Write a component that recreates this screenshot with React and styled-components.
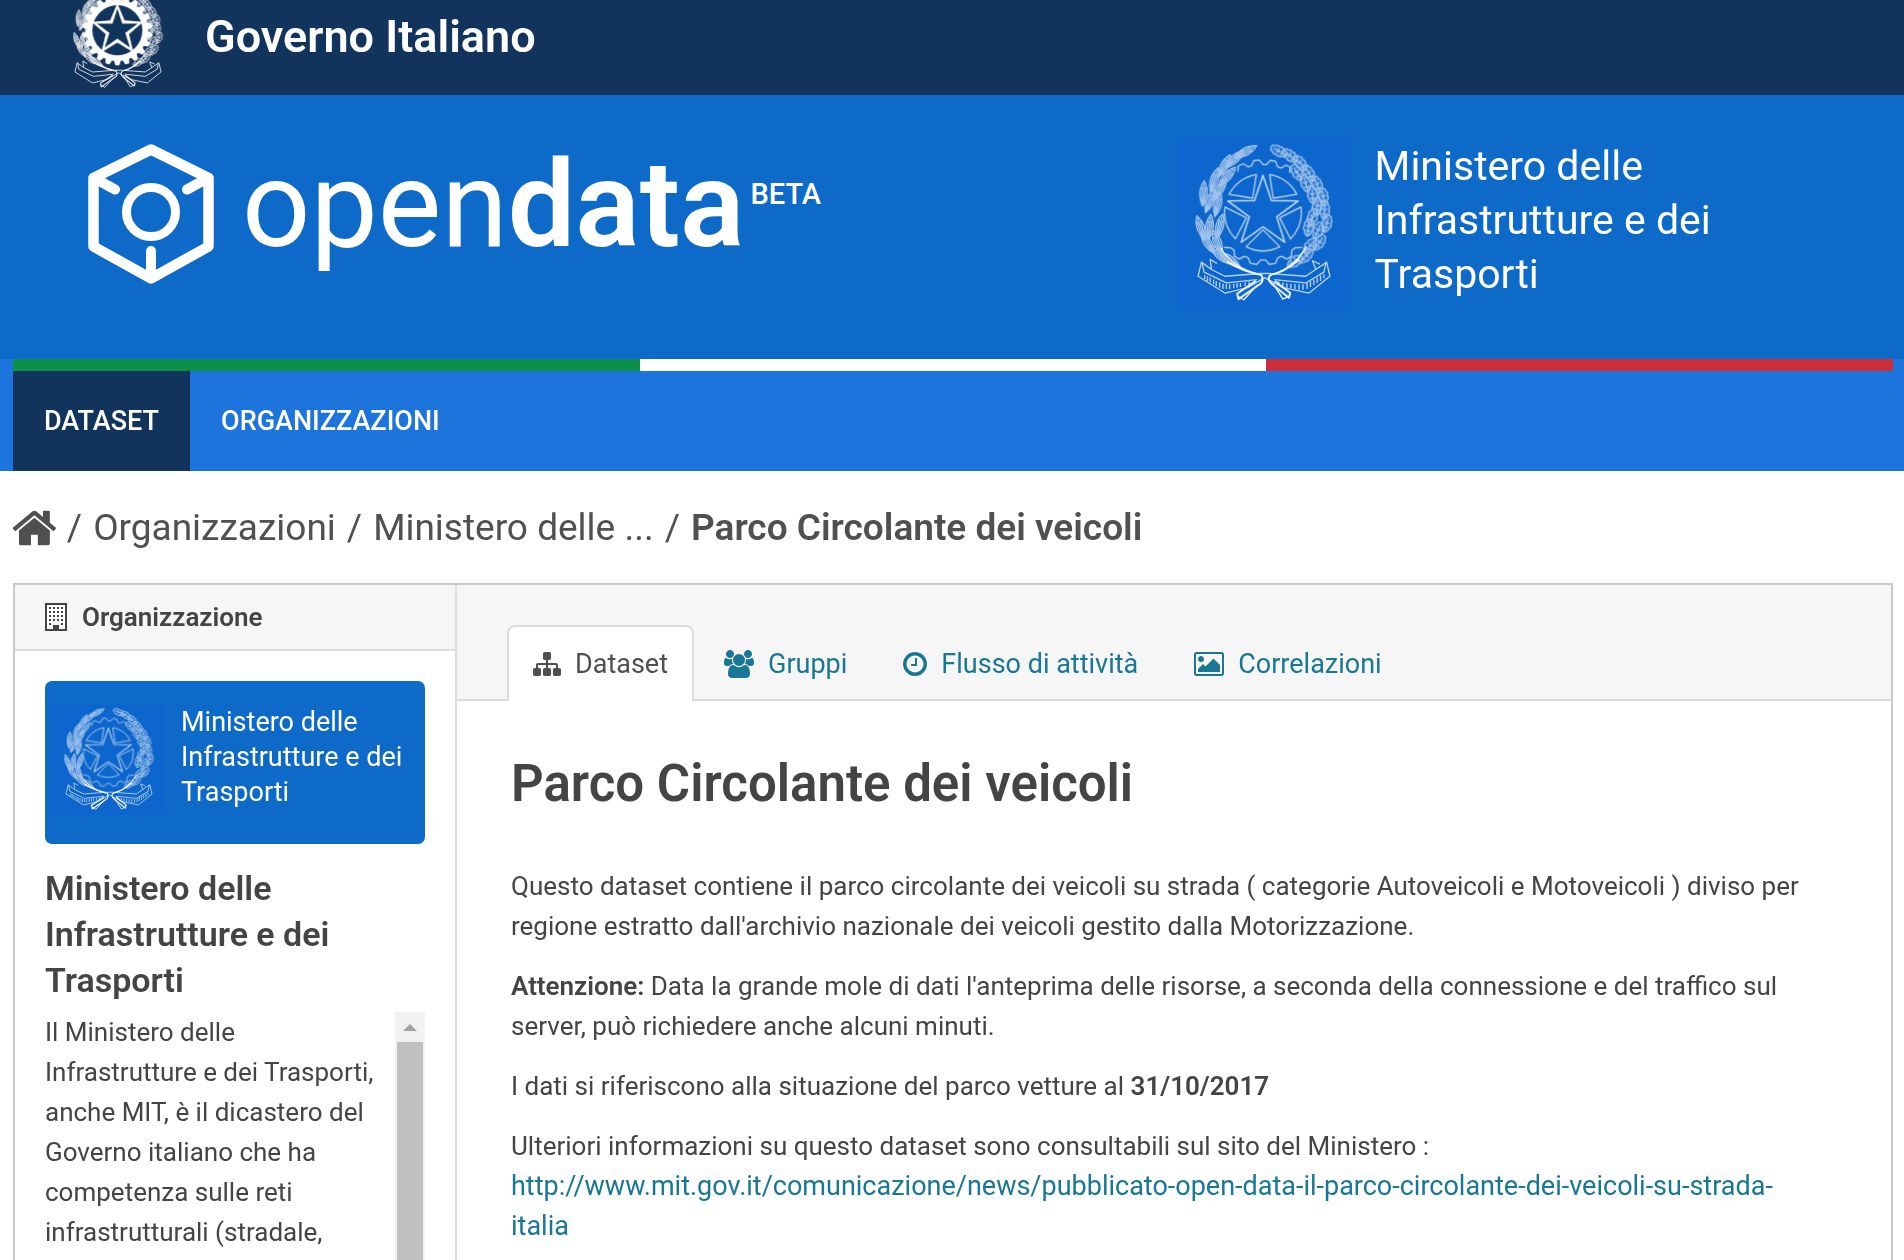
import React from "react";
import styled, { createGlobalStyle, css } from "styled-components";

const color = {
  navy: "#12345c",
  header: "#0d6ac8",
  tile: "#0d66cd",
  nav: "#1c74dc",
  text: "#444444",
  link: "#187794",
  panel: "#f6f6f6",
  edge: "#c8c8c8",
  line: "#dcdcdc",
};

const GlobalStyle = createGlobalStyle`
  *, *::before, *::after { box-sizing: border-box; }
  body {
    margin: 0;
    color: ${color.text};
    background: #ffffff;
    font-family: Roboto, "Liberation Sans", sans-serif;
    font-size: 26px;
    line-height: 40px;
  }
  a { color: inherit; text-decoration: none; }
  h1, h2, p, ul, ol { margin: 0; padding: 0; }
  ul, ol { list-style: none; }
  svg { display: block; flex: none; }
`;

const Page = styled.div`
  display: flex;
  flex-direction: column;
  height: 100vh;
  overflow: hidden;
`;

/* ---------- government bar ---------- */

const GovernmentBar = styled.div`
  display: flex;
  flex: none;
  align-items: flex-end;
  gap: 40px;
  height: 95px;
  padding: 0 71px 6px;
  overflow: hidden;
  color: #ffffff;
  background: ${color.navy};
`;

const GovernmentName = styled.a`
  padding-bottom: 22px;
  font-size: 45px;
  font-weight: 600;
  line-height: 60px;
`;

/* ---------- site header ---------- */

const SiteHeader = styled.header`
  display: flex;
  flex: none;
  justify-content: space-between;
  height: 264px;
  padding-left: 88px;
  color: #ffffff;
  background: ${color.header};
`;

const Brand = styled.a`
  display: flex;
  align-items: flex-start;
  gap: 28px;
  padding-top: 49px;
`;

const Wordmark = styled.span`
  display: flex;
  font-size: 120px;
  line-height: 122px;
`;

const Strong = styled.strong`
  font-weight: 600;
`;

const Beta = styled.span`
  padding: 26px 0 0 6px;
  font-size: 29px;
  font-weight: 500;
  line-height: 48px;
`;

const MinistryLogo = styled.div`
  display: flex;
  color: #ffffff;

  ${({ $compact }) =>
    $compact
      ? css`
          gap: 16px;
          padding: 22px 8px 29px;
          border-radius: 7px;
          background: ${color.header};
          font-size: 27px;
          line-height: 35px;
        `
      : css`
          gap: 24px;
          width: 40%;
          padding-top: 42px;
          font-size: 41px;
          line-height: 54px;
        `}
`;

const EmblemTile = styled.span`
  display: grid;
  place-items: center;
  flex: none;
  width: ${({ $compact }) => ($compact ? 112 : 173)}px;
  height: ${({ $compact }) => ($compact ? 112 : 172)}px;
  background: ${color.tile};
`;

const MinistryName = styled.span`
  max-width: 360px;
  padding-top: 2px;
`;

/* ---------- navigation ---------- */

const NavBar = styled.nav`
  flex: none;
  padding: 0 11px 0 13px;
  background: ${color.nav};
`;

const Flag = styled.div`
  display: grid;
  grid-template-columns: repeat(3, 1fr);
  height: 12px;
`;

const FlagBand = styled.span`
  background: ${({ $fill }) => $fill};
`;

const NavList = styled.ul`
  display: flex;
`;

const NavLink = styled.a`
  display: block;
  padding: 0 31px;
  color: #ffffff;
  background: ${({ $active }) => ($active ? color.navy : "transparent")};
  font-size: 27px;
  font-weight: 500;
  line-height: 100px;
`;

/* ---------- breadcrumb ---------- */

const Breadcrumb = styled.ol`
  display: flex;
  flex: none;
  align-items: center;
  height: 112px;
  padding: 2px 13px 0;
  color: #505050;
  font-size: 37px;
  line-height: 48px;
`;

const Crumb = styled.li`
  display: flex;
  font-weight: ${({ $current }) => ($current ? 600 : 400)};

  li + &::before {
    content: "/";
    padding: 0 11px;
    font-weight: 400;
  }
`;

/* ---------- content panel ---------- */

const Panel = styled.div`
  display: grid;
  flex: 1;
  grid-template-columns: 442px 1fr;
  min-height: 0;
  margin: 0 11px 0 13px;
  border: 2px solid ${color.edge};
  border-bottom: 0;
`;

const Sidebar = styled.aside`
  display: flex;
  flex-direction: column;
  min-height: 0;
  border-right: 2px solid ${color.line};
`;

const SidebarTitle = styled.h2`
  display: flex;
  flex: none;
  align-items: center;
  gap: 15px;
  height: 66px;
  padding: 0 30px;
  border-bottom: 2px solid ${color.line};
  background: ${color.panel};
  font-size: 26px;
  font-weight: 600;
`;

const SidebarBody = styled.div`
  display: flex;
  flex: 1;
  flex-direction: column;
  min-height: 0;
  padding: 30px 30px 0;
`;

const OrganizationName = styled.h1`
  max-width: 320px;
  padding: 21px 0 9px;
  font-size: 34px;
  font-weight: 600;
  line-height: 46px;
`;

const ScrollArea = styled.div`
  display: grid;
  flex: 1;
  grid-template-columns: 1fr 30px;
  column-gap: 10px;
  min-height: 0;
  overflow: hidden;
`;

const ScrollTrack = styled.div`
  display: flex;
  flex-direction: column;
  background: #f1f1f1;
`;

const ScrollArrow = styled.button`
  display: grid;
  place-items: center;
  height: 30px;
  padding: 0;
  border: 0;
  background: transparent;
`;

const ScrollThumb = styled.span`
  flex: 1;
  margin: 0 2px;
  background: #c1c1c1;
`;

/* ---------- main column ---------- */

const TabBar = styled.ul`
  display: flex;
  align-items: flex-end;
  gap: 4px;
  height: 116px;
  padding: 0 50px;
  background: ${color.panel};
  box-shadow: inset 0 -2px ${color.line};
`;

const Tab = styled.a`
  display: flex;
  align-items: center;
  gap: 14px;
  height: 76px;
  padding: 0 24px;
  border: 2px solid transparent;
  border-bottom: 0;
  color: ${color.link};
  font-size: 27px;

  ${({ $active }) =>
    $active &&
    css`
      border-color: ${color.line};
      border-radius: 8px 8px 0 0;
      color: #505050;
      background: #ffffff;
    `}
`;

const Article = styled.article`
  display: flex;
  flex-direction: column;
  gap: 20px;
  padding: 53px 70px 0 54px;
`;

const Title = styled.h1`
  padding-bottom: 32px;
  font-size: 51px;
  font-weight: 600;
  line-height: 60px;
`;

const SourceLink = styled.a`
  color: ${color.link};
  font-size: 27px;
`;

/* ---------- icons ---------- */

const ICONS = {
  home: {
    box: "97 0 1600 1792",
    d: "M1472 992v480q0 26-19 45t-45 19h-384v-384h-256v384h-384q-26 0-45-19t-19-45v-480q0-1 .5-3t.5-3l575-474 575 474q1 2 1 6zm223-69l-62 74q-8 9-21 11h-3q-13 0-21-7l-692-577-692 577q-12 8-24 7-13-2-21-11l-62-74q-8-10-7-23.5t11-21.5l719-599q32-26 76-26t76 26l244 204v-195q0-14 9-23t23-9h192q14 0 23 9t9 23v408l219 182q10 8 11 21.5t-7 23.5z",
  },
  sitemap: {
    box: "0 0 1792 1792",
    d: "M1792 1248v320q0 40-28 68t-68 28h-320q-40 0-68-28t-28-68v-320q0-40 28-68t68-28h96v-192h-512v192h96q40 0 68 28t28 68v320q0 40-28 68t-68 28h-320q-40 0-68-28t-28-68v-320q0-40 28-68t68-28h96v-192h-512v192h96q40 0 68 28t28 68v320q0 40-28 68t-68 28h-320q-40 0-68-28t-28-68v-320q0-40 28-68t68-28h96v-192q0-52 38-90t90-38h512v-192h-96q-40 0-68-28t-28-68v-320q0-40 28-68t68-28h320q40 0 68 28t28 68v320q0 40-28 68t-68 28h-96v192h512q52 0 90 38t38 90v192h96q40 0 68 28t28 68z",
  },
  users: {
    box: "64 0 1920 1792",
    d: "M657 896q-162 5-265 128h-134q-82 0-138-40.5t-56-118.5q0-353 124-353 6 0 43.5 21t97.5 42.5 119 21.5q67 0 133-23-5 37-5 66 0 139 81 256zm1071 637q0 120-73 189.5t-194 69.5h-874q-121 0-194-69.5t-73-189.5q0-53 3.5-103.5t14-109 26.5-108.5 43-97.5 62-81 85.5-53.5 111.5-20q10 0 43 21.5t73 48 107 48 135 21.5 135-21.5 107-48 73-48 43-21.5q61 0 111.5 20t85.5 53.5 62 81 43 97.5 26.5 108.5 14 109 3.5 103.5zm-1024-1277q0 106-75 181t-181 75-181-75-75-181 75-181 181-75 181 75 75 181zm704 384q0 159-112.5 271.5t-271.5 112.5-271.5-112.5-112.5-271.5 112.5-271.5 271.5-112.5 271.5 112.5 112.5 271.5zm576 225q0 78-56 118.5t-138 40.5h-134q-103-123-265-128 81-117 81-256 0-29-5-66 66 23 133 23 59 0 119-21.5t97.5-42.5 43.5-21q124 0 124 353zm-128-609q0 106-75 181t-181 75-181-75-75-181 75-181 181-75 181 75 75 181z",
  },
  clock: {
    box: "128 0 1536 1792",
    d: "M1024 544v448q0 14-9 23t-23 9h-320q-14 0-23-9t-9-23v-64q0-14 9-23t23-9h224v-352q0-14 9-23t23-9h64q14 0 23 9t9 23zm416 352q0-148-73-273t-198-198-273-73-273 73-198 198-73 273 73 273 198 198 273 73 273-73 198-198 73-273zm224 0q0 209-103 385.5t-279.5 279.5-385.5 103-385.5-103-279.5-279.5-103-385.5 103-385.5 279.5-279.5 385.5-103 385.5 103 279.5 279.5 103 385.5z",
  },
  picture: {
    box: "64 0 1920 1792",
    d: "M704 576q0 80-56 136t-136 56-136-56-56-136 56-136 136-56 136 56 56 136zm1024 384v448h-1408v-192l320-320 160 160 512-512zm96-704h-1600q-13 0-22.5 9.5t-9.5 22.5v1216q0 13 9.5 22.5t22.5 9.5h1600q13 0 22.5-9.5t9.5-22.5v-1216q0-13-9.5-22.5t-22.5-9.5zm160 32v1216q0 66-47 113t-113 47h-1600q-66 0-113-47t-47-113v-1216q0-66 47-113t113-47h1600q66 0 113 47t47 113z",
  },
};

function Icon({ name, size = 28, label }) {
  const { box, d } = ICONS[name];
  return (
    <svg
      viewBox={box}
      height={size}
      fill="currentColor"
      role={label ? "img" : undefined}
      aria-label={label}
      aria-hidden={label ? undefined : true}
    >
      <path d={d} />
    </svg>
  );
}

function BuildingIcon() {
  const windows = [];
  for (let row = 0; row < 5; row += 1) {
    for (let col = 0; col < 4; col += 1) {
      if (row === 4 && (col === 1 || col === 2)) continue;
      windows.push(
        <rect key={`${row}-${col}`} x={4 + col * 4} y={4 + row * 4} width="2" height="2" />
      );
    }
  }
  return (
    <svg width="22" height="28" viewBox="0 0 22 28" fill={color.text} aria-hidden="true">
      <rect x="1" y="1" width="20" height="26" fill="#ffffff" stroke={color.text} strokeWidth="2" />
      {windows}
      <rect x="8" y="22" width="6" height="5" />
    </svg>
  );
}

function CubeLogo() {
  return (
    <svg width="126" height="140" viewBox="88 144 126 140" fill="none" stroke="#ffffff" strokeLinecap="round" strokeLinejoin="round" aria-hidden="true">
      <path d="M151 149.500L208.500 178V246.500L151 278.500L93.500 246.500V178Z" strokeWidth="10.500" />
      <path d="M94 178L115 189.500M208 178L187 189.500M151 251V276" strokeWidth="10" />
      <circle cx="151" cy="212" r="24.500" strokeWidth="9" />
    </svg>
  );
}

const CX = 257;
const CY = 246;

const polar = (r, deg, cx = CX, cy = CY) => {
  const a = ((deg - 90) * Math.PI) / 180;
  return `${(cx + r * Math.cos(a)).toFixed(1)} ${(cy + r * Math.sin(a)).toFixed(1)}`;
};

const starPath = (outer, inner) =>
  `M${Array.from({ length: 10 }, (_, i) => polar(i % 2 ? inner : outer, i * 36)).join("L")}Z`;

const gearPath = (outer, inner, teeth) => {
  const step = 360 / teeth;
  const points = [];
  for (let i = 0; i < teeth; i += 1) {
    const a = i * step;
    points.push(
      polar(inner, a - step * 0.38),
      polar(outer, a - step * 0.2),
      polar(outer, a + step * 0.2),
      polar(inner, a + step * 0.38)
    );
  }
  return `M${points.join("L")}Z`;
};

const wedgePath = (deg) =>
  `M${polar(52, deg)}L${polar(114, deg - 26)}A114 114 0 0 1 ${polar(114, deg + 26)}Z`;

const OLIVE = [
  [205, 66, 62], [172, 88, 46], [142, 108, 28], [150, 140, 42], [112, 150, 18], [128, 178, 32],
  [80, 190, 4], [100, 212, 22], [122, 222, 12], [72, 292, -18], [98, 290, 6], [128, 288, 14],
  [92, 336, -32], [122, 336, -20], [128, 372, -44], [160, 388, -54],
];
const OAK = [
  [304, 64, -62], [338, 78, -50], [368, 100, -40], [358, 128, -30], [394, 130, -30], [384, 160, -14],
  [418, 164, -20], [404, 194, -4], [436, 200, -6], [418, 228, 6], [440, 240, 4], [404, 260, 14],
  [446, 280, 16], [420, 300, 22], [392, 290, 8], [424, 336, 34], [396, 346, 38], [384, 376, 46], [352, 392, 56],
];

function Leaf({ x, y, turn, oak }) {
  const shape = oak
    ? "M0-26Q10-26 9-16Q17-12 12-3Q18 4 11 11Q10 21 0 27Q-10 21-11 11Q-18 4-12-3Q-17-12-9-16Q-10-26 0-26Z"
    : "M0-38Q13-16 11 4Q9 24 0 38Q-9 24-11 4Q-13-16 0-38Z";
  const vein = oak ? "M0-18V27M-7-6L0 2L7-6M-7 8L0 15L7 8" : "M0-30V38M-5-20Q-7 4-2 30M5-20Q7 4 2 30";
  return <path transform={`translate(${x} ${y}) rotate(${turn})`} d={`${shape}${vein}`} />;
}

function Emblem({ width, solid }) {
  const weight = solid ? 4 : 4;
  return (
    <svg width={width} viewBox="46 40 428 474" fill="none" stroke="#ffffff" strokeWidth={weight} strokeLinejoin="round" role="img" aria-label="Emblema della Repubblica Italiana">
      <g opacity={solid ? 0.85 : 0.6} fill="#ffffff" fillOpacity={solid ? 0.06 : 0.16}>
        {OLIVE.map(([x, y, turn]) => (
          <Leaf key={`${x}-${y}`} x={x} y={y} turn={turn} />
        ))}
        {OAK.map(([x, y, turn]) => (
          <Leaf key={`${x}-${y}`} x={x} y={y} turn={turn} oak />
        ))}
      </g>
      {solid ? (
        <g stroke="none">
          <path d={gearPath(160, 140, 22)} fill="#ffffff" />
          <circle cx={CX} cy={CY} r="114" fill={color.navy} />
          <path d={starPath(124, 56)} fill="#ffffff" />
          <path d={starPath(98, 38)} fill={color.navy} />
        </g>
      ) : (
        <g opacity="0.7">
          <path d={`M${polar(142, -32)}L${polar(156, -28)}L${polar(156, -22)}L${polar(142, -18)}L${polar(142, -14)}L${polar(156, -10)}L${polar(156, -4)}L${polar(142, 0)}L${polar(142, 4)}L${polar(156, 8)}L${polar(156, 14)}L${polar(142, 18)}L${polar(142, 22)}L${polar(156, 26)}L${polar(156, 31)}L${polar(142, 34)}`} />
          <path d={`M${polar(156, 132)}L${polar(142, 138)}L${polar(142, 143)}L${polar(156, 147)}L${polar(156, 153)}L${polar(142, 157)}L${polar(142, 162)}L${polar(156, 166)}L${polar(156, 173)}L${polar(142, 177)}L${polar(142, 183)}L${polar(156, 187)}L${polar(156, 194)}L${polar(142, 198)}L${polar(142, 203)}L${polar(156, 207)}L${polar(156, 213)}L${polar(142, 217)}L${polar(142, 222)}L${polar(156, 228)}`} />
          <path d={starPath(110, 43)} strokeWidth="5" />
          {[36, 108, 180, 252, 324].map((deg) => (
            <path key={deg} d={wedgePath(deg)} />
          ))}
        </g>
      )}
      <g opacity={solid ? 0.9 : 0.7}>
        <path d="M74 394L64 436L144 486L212 470L262 440L316 470L394 486L456 436L446 394L414 416L384 436L276 428H250L144 436L104 416Z" fill={solid ? color.navy : color.tile} />
        <path d="M76 396L82 424L148 456L240 446M444 396L438 424L384 456L290 446M104 416L100 386L120 398M414 416L404 390L426 400" />
        {!solid && (
          <path
            strokeWidth="4"
            d="M84 432V444M92 436V450M100 440V454M110 446V460M118 450V466M128 454V470M138 458V474M148 460V474M158 460V474M170 458V472M180 457V470M190 456V468M204 454V466M216 452V462M304 452V462M316 455V466M328 457V470M340 458V472M352 460V474M364 460V476M376 460V476M388 456V474M398 450V468M408 446V462M418 440V456M428 434V450M438 430V442"
          />
        )}
      </g>
      <g strokeWidth={solid ? 5 : 6} opacity="0.9">
        <path d="M150 392Q200 424 252 432Q262 452 244 462L184 504L180 488L236 450M364 386Q320 424 280 432Q266 444 284 460L334 500L338 486L292 450" />
        <path d="M132 352Q164 410 246 430M386 348Q350 412 286 430M240 462L200 506L180 494M286 456L316 504L338 494" strokeWidth="4" />
      </g>
    </svg>
  );
}

/* ---------- page parts ---------- */

function Ministry({ compact }) {
  return (
    <MinistryLogo $compact={compact}>
      <EmblemTile $compact={compact}>
        <Emblem width={compact ? 94 : 144} />
      </EmblemTile>
      <MinistryName>Ministero delle Infrastrutture e dei Trasporti</MinistryName>
    </MinistryLogo>
  );
}

const NAV_ITEMS = [
  { label: "DATASET", active: true },
  { label: "ORGANIZZAZIONI" },
];

const TABS = [
  { icon: "sitemap", label: "Dataset", active: true },
  { icon: "users", label: "Gruppi" },
  { icon: "clock", label: "Flusso di attività" },
  { icon: "picture", label: "Correlazioni" },
];

const SOURCE_URL =
  "http://www.mit.gov.it/comunicazione/news/pubblicato-open-data-il-parco-circolante-dei-veicoli-su-strada-italia";

export default function App() {
  return (
    <Page>
      <GlobalStyle />
      <GovernmentBar>
        <Emblem width={94} solid />
        <GovernmentName href="#governo">Governo Italiano</GovernmentName>
      </GovernmentBar>

      <SiteHeader>
        <Brand href="#home">
          <CubeLogo />
          <Wordmark>
            open<Strong>data</Strong>
            <Beta>BETA</Beta>
          </Wordmark>
        </Brand>
        <Ministry />
      </SiteHeader>

      <NavBar>
        <Flag>
          <FlagBand $fill="#0a9147" />
          <FlagBand $fill="#ffffff" />
          <FlagBand $fill="#cc2f3a" />
        </Flag>
        <NavList>
          {NAV_ITEMS.map(({ label, active }) => (
            <li key={label}>
              <NavLink href="#nav" $active={active}>{label}</NavLink>
            </li>
          ))}
        </NavList>
      </NavBar>

      <Breadcrumb>
        <Crumb>
          <a href="#home"><Icon name="home" size={48} label="Home" /></a>
        </Crumb>
        <Crumb><a href="#organizzazioni">Organizzazioni</a></Crumb>
        <Crumb><a href="#ministero">Ministero delle ...</a></Crumb>
        <Crumb $current><a href="#dataset">Parco Circolante dei veicoli</a></Crumb>
      </Breadcrumb>

      <Panel>
        <Sidebar>
          <SidebarTitle>
            <BuildingIcon />
            Organizzazione
          </SidebarTitle>
          <SidebarBody>
            <Ministry compact />
            <OrganizationName>Ministero delle Infrastrutture e dei Trasporti</OrganizationName>
            <ScrollArea>
              <p>
                Il Ministero delle Infrastrutture e dei Trasporti, anche MIT, è il dicastero del
                Governo italiano che ha competenza sulle reti infrastrutturali (stradale,
              </p>
              <ScrollTrack>
                <ScrollArrow type="button" aria-label="Scorri in alto">
                  <svg width="14" height="7" viewBox="0 0 14 7" fill="#a3a3a3" aria-hidden="true">
                    <path d="M7 0L14 7H0Z" />
                  </svg>
                </ScrollArrow>
                <ScrollThumb />
              </ScrollTrack>
            </ScrollArea>
          </SidebarBody>
        </Sidebar>

        <main>
          <TabBar>
            {TABS.map(({ icon, label, active }) => (
              <li key={label}>
                <Tab href="#tab" $active={active}>
                  <Icon name={icon} />
                  {label}
                </Tab>
              </li>
            ))}
          </TabBar>
          <Article>
            <Title>Parco Circolante dei veicoli</Title>
            <p>
              Questo dataset contiene il parco circolante dei veicoli su strada ( categorie
              Autoveicoli e Motoveicoli ) diviso per regione estratto dall'archivio nazionale dei
              veicoli gestito dalla Motorizzazione.
            </p>
            <p>
              <Strong>Attenzione:</Strong> Data la grande mole di dati l'anteprima delle risorse, a
              seconda della connessione e del traffico sul server, può richiedere anche alcuni
              minuti.
            </p>
            <p>
              I dati si riferiscono alla situazione del parco vetture al <Strong>31/10/2017</Strong>
            </p>
            <p>
              Ulteriori informazioni su questo dataset sono consultabili sul sito del Ministero :{" "}
              <SourceLink href={SOURCE_URL}>{SOURCE_URL}</SourceLink>
            </p>
          </Article>
        </main>
      </Panel>
    </Page>
  );
}
